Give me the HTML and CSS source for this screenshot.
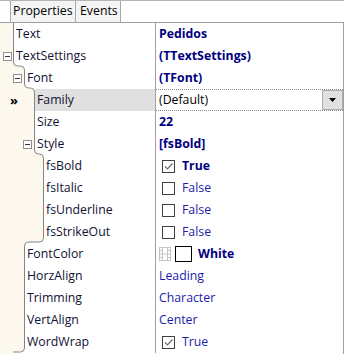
FILE: index.html
```html
<!DOCTYPE html>
<html>
<head>
<meta charset="utf-8">
<link rel="stylesheet" href="styles.css">
</head>
<body>
<div class="inspector">
  <div class="tabs">
    <div class="tab active">Properties</div>
    <div class="tab">Events</div>
  </div>
  <div class="grid">
    <svg class="tree" width="60" height="331" aria-hidden="true">
      <g transform="translate(0,-23)">
        <path class="fill" d="M0 23 H13.5 V62 Q13.5 66 17.5 66 H20.5 Q24.5 66 24.5 70 V84 Q24.5 88 28.5 88 H30.5 Q34.5 88 34.5 92 V150 Q34.5 154 38.5 154 H39.5 Q43.5 154 43.5 158 V238 Q43.5 242 39.5 242 H28.5 Q24.5 242 24.5 246 V348 Q24.5 352 20.5 352 H13.5 V354 H0 Z"/>
        <path class="line" d="M13.5 23 V62 Q13.5 66 17.5 66 H20.5 Q24.5 66 24.5 70 V84 Q24.5 88 28.5 88 H30.5 Q34.5 88 34.5 92 V150 Q34.5 154 38.5 154 H39.5 Q43.5 154 43.5 158 V238 Q43.5 242 39.5 242 H28.5 Q24.5 242 24.5 246 V348 Q24.5 352 20.5 352 H13"/>
      </g>
    </svg>

    <div class="row">
      <div class="name"><div class="gut g0"></div><div class="label">Text</div></div>
      <div class="value mod">Pedidos</div>
    </div>
    <div class="row">
      <div class="name"><div class="gut g0"><span class="box b0"></span></div><div class="label">TextSettings</div></div>
      <div class="value mod">(TTextSettings)</div>
    </div>
    <div class="row">
      <div class="name"><div class="gut g1"><span class="box b1"></span></div><div class="label">Font</div></div>
      <div class="value mod">(TFont)</div>
    </div>
    <div class="row">
      <div class="name"><div class="gut g2"><span class="mark">»</span></div><div class="label sel">Family</div></div>
      <div class="value edit"><span class="edit-text">(Default)</span><span class="drop"><svg width="8" height="5"><path d="M0 0 H7 L3.5 4 Z" fill="#000"/></svg></span></div>
    </div>
    <div class="row">
      <div class="name"><div class="gut g2"></div><div class="label">Size</div></div>
      <div class="value mod">22</div>
    </div>
    <div class="row">
      <div class="name"><div class="gut g2"><span class="box b2"></span></div><div class="label">Style</div></div>
      <div class="value mod">[fsBold]</div>
    </div>
    <div class="row">
      <div class="name"><div class="gut g3"></div><div class="label">fsBold</div></div>
      <div class="value"><span class="check on"><svg width="11" height="11"><path d="M2 5.5 L4.5 8 L9.5 2.5" fill="none" stroke="#6b6b6b" stroke-width="1.2"/></svg></span><span class="mod">True</span></div>
    </div>
    <div class="row">
      <div class="name"><div class="gut g3"></div><div class="label">fsItalic</div></div>
      <div class="value"><span class="check"></span><span class="def">False</span></div>
    </div>
    <div class="row">
      <div class="name"><div class="gut g3"></div><div class="label">fsUnderline</div></div>
      <div class="value"><span class="check"></span><span class="def">False</span></div>
    </div>
    <div class="row">
      <div class="name"><div class="gut g3"></div><div class="label">fsStrikeOut</div></div>
      <div class="value"><span class="check"></span><span class="def">False</span></div>
    </div>
    <div class="row">
      <div class="name"><div class="gut g1"></div><div class="label">FontColor</div></div>
      <div class="value"><span class="film"><svg width="12" height="14"><g fill="none" stroke="#c4c4c4"><rect x="0.5" y="0.5" width="11" height="13"/><line x1="3.5" y1="0.5" x2="3.5" y2="13.5"/><line x1="8.5" y1="0.5" x2="8.5" y2="13.5"/><line x1="3.5" y1="7" x2="8.5" y2="7"/><line x1="0.5" y1="3.5" x2="3.5" y2="3.5"/><line x1="0.5" y1="7" x2="3.5" y2="7"/><line x1="0.5" y1="10.5" x2="3.5" y2="10.5"/><line x1="8.5" y1="3.5" x2="11.5" y2="3.5"/><line x1="8.5" y1="7" x2="11.5" y2="7"/><line x1="8.5" y1="10.5" x2="11.5" y2="10.5"/></g></svg></span><span class="swatch"></span><span class="mod">White</span></div>
    </div>
    <div class="row">
      <div class="name"><div class="gut g1"></div><div class="label">HorzAlign</div></div>
      <div class="value def">Leading</div>
    </div>
    <div class="row">
      <div class="name"><div class="gut g1"></div><div class="label">Trimming</div></div>
      <div class="value def">Character</div>
    </div>
    <div class="row">
      <div class="name"><div class="gut g1"></div><div class="label">VertAlign</div></div>
      <div class="value def">Center</div>
    </div>
    <div class="row">
      <div class="name"><div class="gut g1"></div><div class="label">WordWrap</div></div>
      <div class="value"><span class="check on"><svg width="11" height="11"><path d="M2 5.5 L4.5 8 L9.5 2.5" fill="none" stroke="#6b6b6b" stroke-width="1.2"/></svg></span><span class="def">True</span></div>
    </div>
  </div>
</div>
</body>
</html>
```

FILE: styles.css
```css
html, body {
  margin: 0;
  padding: 0;
  background: #ffffff;
}
body {
  width: 345px;
  height: 354px;
  overflow: hidden;
  font-family: "Open Sans", "Noto Sans", sans-serif;
  font-size: 12.3px;
  color: #111133;
}
.inspector {
  width: 344px;
}
.tabs {
  display: flex;
  border-top: 1px solid #b4b4b4;
  padding-left: 10px;
  box-sizing: border-box;
  height: 22px;
}
.tab {
  height: 21px;
  line-height: 19px;
  padding: 0 3px;
  border-right: 1px solid #a8a8a8;
  background: #f4f4f4;
  color: #000;
  box-sizing: border-box;
  white-space: nowrap;
}
.tab.active {
  border-left: 1px solid #a8a8a8;
  width: 66px;
  padding-left: 2px;
}
.tab:not(.active) {
  width: 45px;
  padding-left: 4px;
}
.grid {
  position: relative;
  z-index: 0;
  border-top: 1px solid #a0a0a0;
  border-right: 1px solid #a0a0a0;
  height: 331px;
}
.tree {
  position: absolute;
  left: 0;
  top: 0;
  z-index: -1;
}
.tree .fill {
  fill: #fcf8ee;
}
.tree .line {
  fill: none;
  stroke: #858585;
  stroke-width: 1;
}
.row {
  display: flex;
  height: 22px;
}
.name {
  width: 155px;
  flex: none;
  display: flex;
  border-right: 1px solid #a0a0a0;
}
.gut {
  flex: none;
  display: flex;
  align-items: center;
}
.g0 { width: 14px; }
.g1 { width: 25px; }
.g2 { width: 35px; }
.g3 { width: 44px; }
.label {
  flex: 1;
  padding-left: 2px;
  line-height: 22px;
  white-space: nowrap;
}
.label.sel {
  background: #e0e0e0;
}
.box {
  width: 7px;
  height: 7px;
  border: 1px solid #919191;
  background: #fff;
  position: relative;
}
.box::after {
  content: "";
  position: absolute;
  left: 1px;
  top: 3px;
  width: 5px;
  height: 1px;
  background: #333;
}
.b0 { margin-left: 3px; }
.b1 { margin-left: 13px; }
.b2 { margin-left: 23px; }
.mark {
  margin-left: 10px;
  font-size: 13px;
  font-weight: bold;
  color: #000;
  line-height: 22px;
}
.value {
  flex: 1;
  display: flex;
  align-items: center;
  padding-left: 3px;
  white-space: nowrap;
  line-height: 22px;
}
.mod {
  color: #000080;
  font-weight: bold;
}
.def {
  color: #1c1ca8;
}
.edit {
  padding-left: 0;
  border-top: 1px dotted #8a8a8a;
  border-bottom: 1px dotted #8a8a8a;
  height: 20px;
  line-height: 20px;
  color: #000;
  justify-content: space-between;
}
.edit-text {
  padding-left: 3px;
}
.drop {
  width: 19px;
  height: 18px;
  background: #e1e1e1;
  border: 1px solid #adadad;
  display: flex;
  align-items: center;
  justify-content: center;
}
.drop svg {
  display: block;
}
.check {
  width: 11px;
  height: 11px;
  border: 1px solid #404040;
  background: #fff;
  margin-left: 3px;
  margin-right: 7px;
  flex: none;
}
.check svg {
  display: block;
}
.film {
  display: flex;
  margin-right: 4px;
}
.film svg {
  display: block;
}
.swatch {
  width: 15px;
  height: 14px;
  border: 1px solid #000;
  background: #fff;
  margin-right: 6px;
}
```
